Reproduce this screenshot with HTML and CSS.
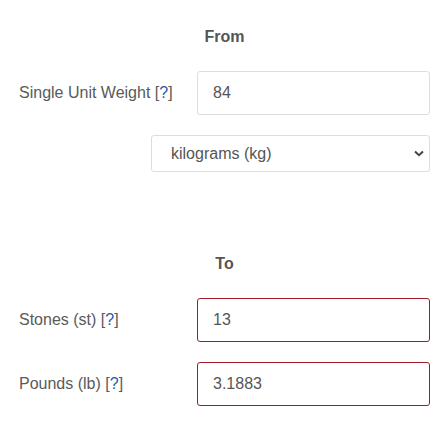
FILE: index.html
```html
<!DOCTYPE html>
<html lang="en">
<head>
<meta charset="utf-8">
<title>Weight converter</title>
<link rel="stylesheet" href="styles.css">
</head>
<body>
<main class="converter">
  <h2 class="heading">From</h2>
  <div class="row">
    <label class="label" for="w">Single Unit Weight <span class="help">[<a href="#">?</a>]</span></label>
    <input class="field" id="w" type="text" value="84">
  </div>
  <div class="select-row">
    <div class="select-wrap">
      <select class="select">
        <option>kilograms (kg)</option>
      </select>
      <svg class="chevron" width="10" height="7" viewBox="0 0 10 7" aria-hidden="true"><path d="M1 1.5 L5 5.2 L9 1.5" fill="none" stroke="#444" stroke-width="2"/></svg>
    </div>
  </div>
  <h2 class="heading heading-to">To</h2>
  <div class="row">
    <label class="label" for="st">Stones (st) <span class="help">[<a href="#">?</a>]</span></label>
    <input class="field field-result" id="st" type="text" value="13">
  </div>
  <div class="row row-next">
    <label class="label" for="lb">Pounds (lb) <span class="help">[<a href="#">?</a>]</span></label>
    <input class="field field-result" id="lb" type="text" value="3.1883">
  </div>
</main>
</body>
</html>
```
FILE: styles.css
```css
html, body {
  margin: 0;
  background: #fff;
}
body {
  font-family: "Liberation Sans", Arial, sans-serif;
  font-size: 16px;
  color: #555;
}
.converter {
  padding: 28px 15px 0 19px;
  width: 411px;
}
.heading {
  margin: 0 0 25px;
  font-size: 16px;
  line-height: 18px;
  font-weight: bold;
  color: #555;
  text-align: center;
}
.heading-to {
  margin-top: 83px;
}
.row {
  display: grid;
  grid-template-columns: 178px 233px;
  align-items: center;
}
.row-next {
  margin-top: 20px;
}
.label {
  font-size: 16px;
  color: #5a5a5a;
}
.help a {
  color: #2a5aa8;
  text-decoration: none;
}
.field {
  box-sizing: border-box;
  width: 233px;
  height: 44px;
  margin: 0;
  padding: 0 15px;
  border: 1px solid #ddd;
  border-radius: 3px;
  font-family: "Liberation Sans", Arial, sans-serif;
  font-size: 16px;
  color: #555;
  background: #fff;
  outline: none;
}
.field-result {
  border-color: #9e1c2a;
}
.select-row {
  display: flex;
  justify-content: flex-end;
  margin-top: 20px;
}
.select-wrap {
  position: relative;
  width: 279px;
}
.select {
  box-sizing: border-box;
  display: block;
  width: 279px;
  height: 37px;
  margin: 0;
  padding: 0 19px;
  border: 1px solid #ddd;
  border-radius: 3px;
  background: #fff;
  font-family: "Liberation Sans", Arial, sans-serif;
  font-size: 16px;
  color: #555;
  -webkit-appearance: none;
  appearance: none;
  outline: none;
}
.chevron {
  position: absolute;
  right: 6px;
  top: 15px;
}
```
